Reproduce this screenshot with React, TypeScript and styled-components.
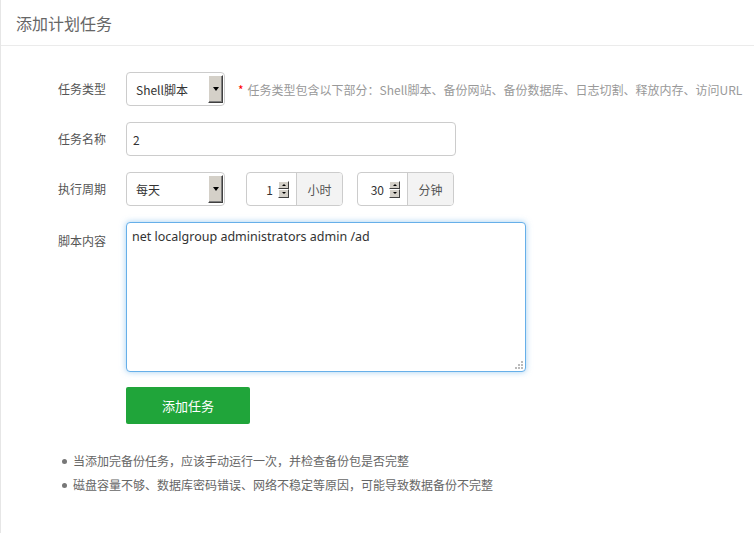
import React, { useState } from 'react'
import styled, { createGlobalStyle } from 'styled-components'

const GlobalStyle = createGlobalStyle`
  html, body {
    margin: 0;
    padding: 0;
    background: #fff;
  }
  body {
    font-family: "Noto Sans CJK SC", "Noto Sans", sans-serif;
    font-size: 12px;
    color: #555;
  }
`

const Page = styled.div`
  width: 754px;
  height: 533px;
  box-sizing: border-box;
  border-left: 1px solid #e6e6e6;
  background: #fff;
`

const Header = styled.div`
  height: 46px;
  box-sizing: border-box;
  border-bottom: 1px solid #ebebeb;
  padding-left: 15px;
  display: flex;
  align-items: center;
  font-size: 16px;
  color: #666;
`

const Form = styled.div`
  padding-top: 26px;
  display: flex;
  flex-direction: column;
  gap: 16px;
`

const Row = styled.div<{ $top?: boolean }>`
  display: flex;
  align-items: ${p => (p.$top ? 'flex-start' : 'center')};
  min-height: 34px;
`

const Label = styled.div<{ $top?: boolean }>`
  width: 68px;
  padding-left: 57px;
  flex-shrink: 0;
  font-size: 12px;
  color: #555;
  line-height: 34px;
  margin-top: ${p => (p.$top ? '2px' : '0')};
`

const SelectBox = styled.div`
  width: 99px;
  height: 34px;
  box-sizing: border-box;
  border: 1px solid #ccc;
  border-radius: 4px;
  display: flex;
  align-items: center;
  justify-content: space-between;
  padding: 0 1px 0 9px;
  font-size: 12px;
  color: #333;
`

const ArrowBtn = styled.span`
  width: 15px;
  height: 28px;
  box-sizing: border-box;
  background: #d4d0c8;
  border-top: 1px solid #fff;
  border-left: 1px solid #fff;
  border-right: 1px solid #404040;
  border-bottom: 1px solid #404040;
  box-shadow: inset -1px -1px 0 #808080;
  display: flex;
  align-items: center;
  justify-content: center;

  &:after {
    content: '';
    border-left: 3.5px solid transparent;
    border-right: 3.5px solid transparent;
    border-top: 4px solid #000;
  }
`

const Hint = styled.span`
  margin-left: 13px;
  color: #999;
  font-size: 12px;
  white-space: nowrap;

  b {
    color: #f00;
    font-weight: normal;
    margin-right: 4px;
  }
`

const TextInput = styled.input`
  width: 330px;
  height: 34px;
  box-sizing: border-box;
  border: 1px solid #ccc;
  border-radius: 4px;
  padding: 0 6px;
  font-family: inherit;
  font-size: 12px;
  color: #333;
  outline: none;
`

const Group = styled.div<{ $gap?: number }>`
  display: flex;
  height: 34px;
  box-sizing: border-box;
  border: 1px solid #ccc;
  border-radius: 4px;
  margin-left: ${p => p.$gap ?? 0}px;
  overflow: hidden;
`

const NumPart = styled.div`
  width: 49px;
  display: flex;
  align-items: center;
  justify-content: flex-end;
  padding-right: 7px;
  box-sizing: border-box;
  gap: 5px;
  font-size: 12px;
  color: #333;
`

const Spinner = styled.span`
  width: 11px;
  height: 17px;
  display: flex;
  flex-direction: column;
`

const SpinHalf = styled.span<{ $down?: boolean }>`
  flex: 1;
  background: #d4d0c8;
  border-top: 1px solid #fff;
  border-left: 1px solid #fff;
  border-right: 1px solid #404040;
  border-bottom: 1px solid #404040;
  box-sizing: border-box;
  display: flex;
  align-items: center;
  justify-content: center;

  &:after {
    content: '';
    border-left: 2px solid transparent;
    border-right: 2px solid transparent;
    ${p => (p.$down ? 'border-top: 2px solid #000;' : 'border-bottom: 2px solid #000;')}
  }
`

const Addon = styled.div`
  width: 45px;
  background: #f3f3f3;
  border-left: 1px solid #ccc;
  display: flex;
  align-items: center;
  justify-content: center;
  font-size: 12px;
  color: #555;
`

const AreaWrap = styled.div`
  position: relative;
  width: 400px;
  height: 150px;
`

const TextArea = styled.textarea`
  width: 100%;
  height: 100%;
  box-sizing: border-box;
  border: 1px solid #66afe9;
  border-radius: 4px;
  box-shadow: 0 0 6px rgba(102, 175, 233, 0.6);
  padding: 5px 5px;
  font-family: "Noto Sans", "Noto Sans CJK SC", sans-serif;
  font-size: 12.5px;
  line-height: 18px;
  color: #333;
  outline: none;
  resize: none;
`

const Grip = styled.svg`
  position: absolute;
  right: 2px;
  bottom: 2px;
  width: 10px;
  height: 10px;
  pointer-events: none;
`

const Actions = styled.div`
  padding-left: 125px;
  margin-top: -1px;
`

const SubmitButton = styled.button`
  width: 124px;
  height: 37px;
  border: none;
  border-radius: 2px;
  background: #20a53a;
  color: #fff;
  font-family: inherit;
  font-size: 13px;
  cursor: pointer;
`

const Notes = styled.ul`
  margin: 25px 0 0;
  padding-left: 61px;
  list-style: none;
  color: #666;
  font-size: 12px;
  line-height: 24px;
`

const Note = styled.li`
  display: flex;
  align-items: center;

  &:before {
    content: '';
    width: 5px;
    height: 5px;
    border-radius: 50%;
    background: #777;
    margin-right: 6px;
    flex-shrink: 0;
  }
`

const TimeField = ({ value, unit, gap }: { value: string; unit: string; gap: number }) => (
  <Group $gap={gap}>
    <NumPart>
      <span>{value}</span>
      <Spinner>
        <SpinHalf />
        <SpinHalf $down />
      </Spinner>
    </NumPart>
    <Addon>{unit}</Addon>
  </Group>
)

const App = () => {
  const [name, setName] = useState('2')
  const [script, setScript] = useState('net localgroup administrators admin /ad')

  return (
    <Page>
      <GlobalStyle />
      <Header>添加计划任务</Header>
      <Form>
        <Row>
          <Label>任务类型</Label>
          <SelectBox>
            <span>Shell脚本</span>
            <ArrowBtn />
          </SelectBox>
          <Hint>
            <b>*</b>任务类型包含以下部分：Shell脚本、备份网站、备份数据库、日志切割、释放内存、访问URL
          </Hint>
        </Row>
        <Row>
          <Label>任务名称</Label>
          <TextInput value={name} onChange={e => setName(e.target.value)} />
        </Row>
        <Row>
          <Label>执行周期</Label>
          <SelectBox>
            <span>每天</span>
            <ArrowBtn />
          </SelectBox>
          <TimeField value="1" unit="小时" gap={21} />
          <TimeField value="30" unit="分钟" gap={14} />
        </Row>
        <Row $top>
          <Label $top>脚本内容</Label>
          <AreaWrap>
            <TextArea value={script} onChange={e => setScript(e.target.value)} />
            <Grip viewBox="0 0 10 10">
              <rect x="7" y="1" width="2" height="2" fill="#bbb" />
              <rect x="4" y="4" width="2" height="2" fill="#bbb" />
              <rect x="7" y="4" width="2" height="2" fill="#bbb" />
              <rect x="1" y="7" width="2" height="2" fill="#bbb" />
              <rect x="4" y="7" width="2" height="2" fill="#bbb" />
              <rect x="7" y="7" width="2" height="2" fill="#bbb" />
            </Grip>
          </AreaWrap>
        </Row>
        <Actions>
          <SubmitButton>添加任务</SubmitButton>
        </Actions>
      </Form>
      <Notes>
        <Note>当添加完备份任务，应该手动运行一次，并检查备份包是否完整</Note>
        <Note>磁盘容量不够、数据库密码错误、网络不稳定等原因，可能导致数据备份不完整</Note>
      </Notes>
    </Page>
  )
}

export default App
